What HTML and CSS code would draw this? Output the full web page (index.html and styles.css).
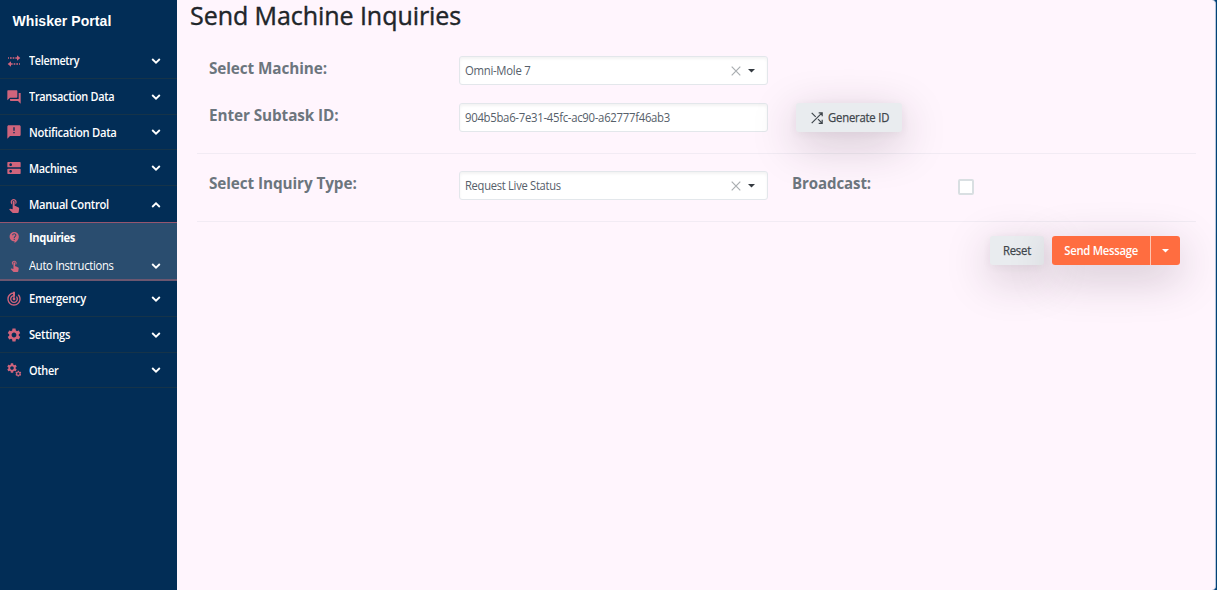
FILE: index.html
```html
<!DOCTYPE html>
<html lang="en">
<head>
<meta charset="utf-8">
<title>Whisker Portal</title>
<link rel="stylesheet" href="styles.css">
</head>
<body>
<svg class="defs" aria-hidden="true">
  <symbol id="down" viewBox="0 0 10 8"><path d="M1.2 2l3.8 3.7L8.800 2" fill="none" stroke="currentColor" stroke-width="1.8"/></symbol>
  <symbol id="up" viewBox="0 0 10 8"><path d="M1.200 6L5 2.300 8.800 6" fill="none" stroke="currentColor" stroke-width="1.8"/></symbol>
  <symbol id="touch" viewBox="0 0 24 24"><path d="M9 11.240V7.500C9 6.120 10.120 5 11.500 5S14 6.120 14 7.500v3.740c1.210-.81 2-2.180 2-3.740C16 5.010 13.990 3 11.500 3S7 5.010 7 7.500c0 1.560.79 2.930 2 3.740zm9.840 4.630l-4.540-2.260c-.17-.07-.35-.11-.54-.11H13v-6c0-.83-.67-1.500-1.500-1.500S10 6.670 10 7.500v10.740l-3.430-.72c-.08-.01-.15-.03-.24-.03-.31 0-.59.13-.79.33l-.79.8 4.940 4.940c.27.27.65.44 1.060.44h6.790c.75 0 1.330-.55 1.440-1.280l.75-5.270c.01-.07.02-.14.02-.2 0-.62-.38-1.160-.91-1.380z"/></symbol>
  <symbol id="gear" viewBox="0 0 24 24"><path d="M19.140 12.940c.04-.3.06-.61.06-.94 0-.32-.02-.64-.07-.94l2.030-1.580c.18-.14.23-.41.12-.61l-1.920-3.320c-.12-.22-.37-.29-.59-.22l-2.390.96c-.5-.38-1.030-.7-1.620-.94l-.36-2.540c-.04-.24-.24-.41-.48-.41h-3.840c-.24 0-.43.17-.47.41l-.36 2.540c-.59.24-1.130.57-1.620.94l-2.390-.96c-.22-.08-.47 0-.59.22L2.740 8.870c-.12.21-.08.47.12.61l2.030 1.580c-.05.3-.09.63-.09.94s.02.64.07.94l-2.030 1.580c-.18.14-.23.41-.12.61l1.920 3.320c.12.22.37.29.59.22l2.390-.96c.5.38 1.030.7 1.620.94l.36 2.540c.05.24.24.41.48.41h3.840c.24 0 .44-.17.47-.41l.36-2.540c.59-.24 1.130-.56 1.620-.94l2.390.96c.22.08.47 0 .59-.22l1.920-3.320c.12-.22.07-.47-.12-.61l-2.010-1.580zM12 15.600c-1.980 0-3.600-1.620-3.600-3.600s1.620-3.600 3.600-3.600 3.600 1.620 3.600 3.600-1.620 3.600-3.600 3.600z"/></symbol>
</svg>
<div class="app">
  <nav class="sidebar">
    <div class="brand">Whisker Portal</div>
    <div class="item"><svg class="icon" viewBox="0 0 24 24"><path d="M16.500 3.500L21.500 7.500l-5 4V8.500H14v-2h2.500zM10 6.500h2.500v2H10zM6 6.500h2.500v2H6zM3 6.500h1.500v2H3zM7.500 12.500v3H10v2H7.500v3l-5-4zM11.500 15.500H14v2h-2.500zM15.500 15.500H18v2h-2.500zM19.500 15.500H21v2h-1.500z"/></svg><span class="label telemetry">Telemetry</span><svg class="chevron"><use href="#down"/></svg></div>
    <div class="item"><svg class="icon" viewBox="0 0 24 24"><path d="M22 6h-3v9H6v2c0 .55.45 1 1 1h11l4 4V7zm-5 6V3c0-.55-.45-1-1-1H3c-.55 0-1 .45-1 1v14l4-4h10c.55 0 1-.45 1-1z"/></svg><span class="label">Transaction Data</span><svg class="chevron"><use href="#down"/></svg></div>
    <div class="item"><svg class="icon" viewBox="0 0 24 24"><path d="M20 2H4c-1.100 0-1.990.9-1.990 2L2 22l4-4h14c1.100 0 2-.9 2-2V4c0-1.100-.9-2-2-2zm-7 12h-2v-2h2v2zm0-4h-2V5h2v5z"/></svg><span class="label notification">Notification Data</span><svg class="chevron"><use href="#down"/></svg></div>
    <div class="item"><svg class="icon" viewBox="0 0 24 24"><path d="M21 13H3c-.55 0-1 .45-1 1v6c0 .55.45 1 1 1h18c.55 0 1-.45 1-1v-6c0-.55-.45-1-1-1zM7 19c-1.100 0-2-.9-2-2s.9-2 2-2 2 .9 2 2-.9 2-2 2zM21 3H3c-.55 0-1 .45-1 1v6c0 .55.45 1 1 1h18c.55 0 1-.45 1-1V4c0-.55-.45-1-1-1zM7 9c-1.100 0-2-.9-2-2s.9-2 2-2 2 .9 2 2-.9 2-2 2z"/></svg><span class="label">Machines</span><svg class="chevron"><use href="#down"/></svg></div>
    <div class="item open"><svg class="icon"><use href="#touch"/></svg><span class="label wide">Manual Control</span><svg class="chevron"><use href="#up"/></svg></div>
    <div class="submenu">
      <div class="subitem current"><svg class="icon small" viewBox="0 0 24 24"><path d="M11.500 2C6.810 2 3 5.810 3 10.500S6.810 19 11.500 19h.5v3c4.860-2.340 8-7 8-11.500C20 5.810 16.190 2 11.500 2zm1 14.500h-2v-2h2v2zm0-3.500h-2c0-3.250 3-3 3-5 0-1.100-.9-2-2-2s-2 .9-2 2h-2c0-2.210 1.790-4 4-4s4 1.790 4 4c0 2.500-3 2.750-3 5z"/></svg><span class="label wide">Inquiries</span></div>
      <div class="subitem"><svg class="icon small"><use href="#touch"/></svg><span class="label wide">Auto Instructions</span><svg class="chevron"><use href="#down"/></svg></div>
    </div>
    <div class="item"><svg class="icon" viewBox="0 0 24 24"><path d="M19.070 4.930l-1.410 1.410C19.100 7.790 20 9.790 20 12c0 4.420-3.580 8-8 8s-8-3.580-8-8c0-4.080 3.050-7.440 7-7.930v2.020C8.160 6.570 6 9.030 6 12c0 3.310 2.690 6 6 6s6-2.690 6-6c0-1.660-.67-3.160-1.760-4.240l-1.410 1.410C15.550 9.900 16 10.900 16 12c0 2.210-1.790 4-4 4s-4-1.790-4-4c0-1.860 1.280-3.410 3-3.860v2.140c-.6.35-1 .98-1 1.720 0 1.100.9 2 2 2s2-.9 2-2c0-.74-.4-1.380-1-1.720V2h-1C6.480 2 2 6.480 2 12s4.480 10 10 10 10-4.480 10-10c0-2.760-1.120-5.260-2.930-7.070z"/><path d="M10.500 1h3v7h-3z"/></svg><span class="label wide">Emergency</span><svg class="chevron"><use href="#down"/></svg></div>
    <div class="item"><svg class="icon"><use href="#gear"/></svg><span class="label wide">Settings</span><svg class="chevron"><use href="#down"/></svg></div>
    <div class="item"><svg class="icon" viewBox="0 0 24 24"><use href="#gear" x="0" y="0" width="18" height="18"/><use href="#gear" x="13" y="12" width="11" height="11"/></svg><span class="label">Other</span><svg class="chevron"><use href="#down"/></svg></div>
  </nav>
  <main class="panel">
    <h1 class="title">Send Machine Inquiries</h1>
    <form class="form">
      <div class="group first">
        <div class="row">
          <label class="caption"><span>Select Machine:</span></label>
          <div class="field"><span class="value omni">Omni-Mole 7</span><svg class="clear" viewBox="0 0 10 10"><path d="M.7.7l8.600 8.600M9.300.7L.7 9.300"/></svg><i class="caret"></i></div>
        </div>
        <div class="row">
          <label class="caption"><span>Enter Subtask ID:</span></label>
          <div class="field"><span class="value uuid">904b5ba6-7e31-45fc-ac90-a62777f46ab3</span></div>
          <button type="button" class="btn generate"><svg class="shuffle" viewBox="0 0 12 12"><path d="M.7.9l4 4M7 7.200l4 4M.7 11.200L11 .9M7.700.8h3.500v3.500M7.700 11.300h3.500V7.800"/></svg><span class="btn-text">Generate ID</span></button>
        </div>
      </div>
      <div class="group second">
        <div class="row">
          <label class="caption"><span>Select Inquiry Type:</span></label>
          <div class="field"><span class="value status">Request Live Status</span><svg class="clear" viewBox="0 0 10 10"><path d="M.7.7l8.600 8.600M9.300.7L.7 9.300"/></svg><i class="caret"></i></div>
          <label class="caption broadcast"><span>Broadcast:</span></label>
          <span class="checkbox"></span>
        </div>
      </div>
      <div class="actions">
        <button type="button" class="btn reset"><span class="btn-text">Reset</span></button>
        <div class="split"><button type="button" class="send"><span class="btn-text">Send Message</span></button><button type="button" class="more"><i class="caret"></i></button></div>
      </div>
    </form>
  </main>
</div>
</body>
</html>
```
FILE: styles.css
```css
* { box-sizing: border-box; }
body { margin: 0; background: #024278; font-family: "Open Sans", "Noto Sans", sans-serif; }
button { border: 0; margin: 0; padding: 0; font-family: inherit; }
.defs { display: none; }
.app { display: flex; width: 1217px; height: 590px; overflow: hidden; background: linear-gradient(to right, #fff5fd 50%, #024278 50%); }

.sidebar { width: 177px; background: #022d56; color: #fff; flex: none; }
.brand { height: 43px; padding: 12px 0 0 12.500px; font: bold 14px/18px "Liberation Sans", Arial, sans-serif; letter-spacing: .06px; }
.item, .subitem { display: flex; align-items: center; padding-left: 6px; }
.item { height: 35.800px; padding-top: 1px; border-bottom: 1px solid #153349; }
.item.open { border-bottom: 0; }
.icon { width: 16px; height: 16px; fill: #d0647c; flex: none; }
.icon.small { width: 13px; height: 13px; margin: 0 1px 0 2px; }
.label { margin-left: 6.500px; width: 122px; font-size: 12px; font-weight: 600; line-height: 18px; padding-top: 1px; letter-spacing: -.32px; white-space: nowrap; transform: scaleX(.91); transform-origin: left; }
.label.wide { transform: scaleX(.935); }
.label.notification { transform: scaleX(.935); }
.label.telemetry { transform: scaleX(.9); }
.chevron { width: 10px; height: 8px; }
.submenu { height: 59px; background: #2a4d6f; border-top: 1px solid #95566f; border-bottom: 2px solid #6c5770; }
.subitem { height: 28.500px; }
.subitem .label { font-weight: 400; }
.subitem.current { padding-top: 1px; }
.subitem.current .label { font-weight: 700; letter-spacing: -.45px; padding-top: 0; }

.panel { width: 1039px; height: 590px; background: #fff5fd; border-right: 1px solid #b9c7db; border-radius: 0 4px 4px 0; }
.title { margin: 0 0 0 13px; height: 38px; font-size: 25px; line-height: 30px; font-weight: 400; -webkit-text-stroke: .4px #212529; color: #212529; letter-spacing: -.06px; white-space: nowrap; }
.form { margin-left: 20px; width: 999px; }
.group { height: 68px; padding: 18px 0 0 12px; border-bottom: 1px solid #f2ebf4; }
.group.first { height: 116px; display: flex; flex-direction: column; gap: 18px; }
.group.second { padding-top: 17px; }
.row { display: flex; height: 29px; }
.caption { width: 249.500px; flex: none; font-size: 16px; line-height: 24px; font-weight: 700; color: #6c757d; letter-spacing: -.1px; white-space: nowrap; }
.caption span { display: inline-block; transform: scaleX(.957); transform-origin: left; }
.broadcast span { transform: scaleX(.94); }
.field { width: 309px; height: 29px; display: flex; align-items: center; padding: 0 11px 0 5px; background: #fff; border: 1px solid #e3e7eb; border-radius: 3px; box-shadow: inset 0 2px 3px rgba(0,0,0,.05); }
.value { flex: 1; font-size: 12px; line-height: 18px; color: #56606a; letter-spacing: -.3px; white-space: nowrap; transform: scaleX(.945); transform-origin: left; }
.value.status { transform: scaleX(.93); }
.clear { width: 10px; height: 10px; margin-right: 7px; fill: none; stroke: #a9aeb1; stroke-width: 1.2; }
.caret { width: 8px; height: 4px; background: #343a40; clip-path: polygon(0 0, 100% 0, 50% 100%); }
.btn { display: flex; align-items: center; justify-content: center; height: 29px; background: #e9ecef; border-radius: 3px; color: #3e454b; font-size: 12px; font-weight: 400; letter-spacing: -.2px; -webkit-text-stroke: .25px #3e454b; box-shadow: 0 12px 44px rgba(50,30,50,.25), 0 2px 8px rgba(50,30,50,.06); }
.btn-text { display: inline-block; transform: scaleX(.94); white-space: nowrap; }
.generate { width: 106px; margin-left: 28px; padding-left: 15.500px; gap: 5px; justify-content: flex-start; }
.generate .btn-text { transform-origin: left; }
.shuffle { width: 12px; height: 12px; flex: none; fill: none; stroke: #3e454b; stroke-width: 1.2; }
.broadcast { width: 166px; margin-left: 24px; }
.checkbox { width: 16px; height: 16px; margin-top: 8px; border: 2px solid #d9dfe2; border-radius: 2px; background: #fff; }
.actions { display: flex; justify-content: flex-end; gap: 8px; padding: 14px 16px 0 0; }
.reset { width: 54px; }
.split { display: flex; width: 128px; height: 29px; border-radius: 3px; box-shadow: 0 12px 44px rgba(50,30,50,.25); }
.send, .more { background: #ff6d40; color: #fff; }
.send { width: 99px; border-radius: 3px 0 0 3px; border-right: 1px solid #ffc4b0; font-size: 12px; font-weight: 600; letter-spacing: -.3px; }
.more { width: 29px; display: flex; align-items: center; justify-content: center; border-radius: 0 3px 3px 0; }
.more .caret { background: #fff; }
```
